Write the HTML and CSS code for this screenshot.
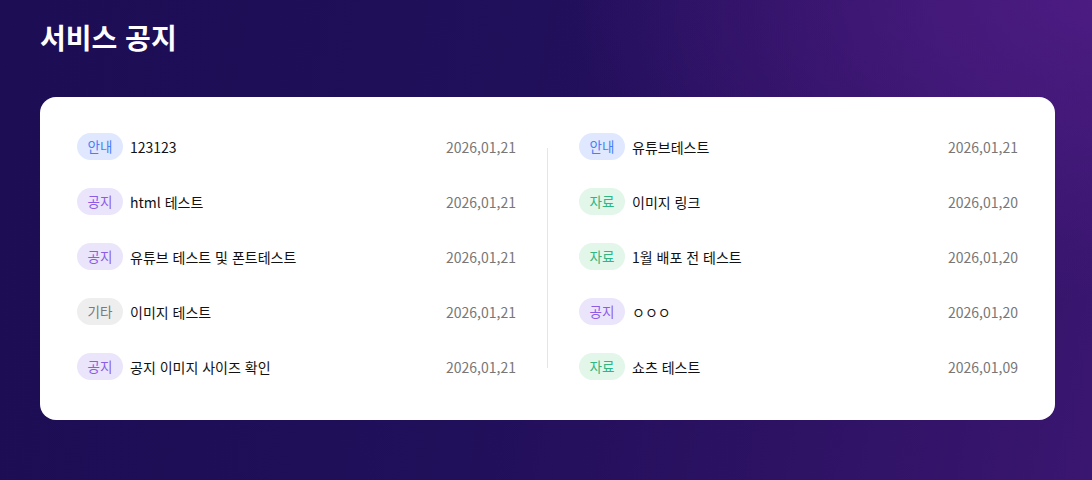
FILE: index.html
```html
<!DOCTYPE html>
<html lang="ko">
<head>
<meta charset="utf-8">
<title>서비스 공지</title>
<link rel="stylesheet" href="styles.css">
</head>
<body>
<main class="page">
  <h1 class="title">서비스 공지</h1>
  <section class="card">
    <ul class="list">
      <li class="row"><span class="badge info">안내</span><span class="subject">123123</span><span class="date">2026,01,21</span></li>
      <li class="row"><span class="badge notice">공지</span><span class="subject">html 테스트</span><span class="date">2026,01,21</span></li>
      <li class="row"><span class="badge notice">공지</span><span class="subject">유튜브 테스트 및 폰트테스트</span><span class="date">2026,01,21</span></li>
      <li class="row"><span class="badge etc">기타</span><span class="subject">이미지 테스트</span><span class="date">2026,01,21</span></li>
      <li class="row"><span class="badge notice">공지</span><span class="subject">공지 이미지 사이즈 확인</span><span class="date">2026,01,21</span></li>
    </ul>
    <div class="divider"></div>
    <ul class="list">
      <li class="row"><span class="badge info">안내</span><span class="subject">유튜브테스트</span><span class="date">2026,01,21</span></li>
      <li class="row"><span class="badge data">자료</span><span class="subject">이미지 링크</span><span class="date">2026,01,20</span></li>
      <li class="row"><span class="badge data">자료</span><span class="subject">1월 배포 전 테스트</span><span class="date">2026,01,20</span></li>
      <li class="row"><span class="badge notice">공지</span><span class="subject">ㅇㅇㅇ</span><span class="date">2026,01,20</span></li>
      <li class="row"><span class="badge data">자료</span><span class="subject">쇼츠 테스트</span><span class="date">2026,01,09</span></li>
    </ul>
  </section>
</main>
</body>
</html>
```
FILE: styles.css
```css
html, body {
  margin: 0;
  height: 100%;
}
body {
  font-family: "Noto Sans CJK KR", "Noto Sans", sans-serif;
  background:
    radial-gradient(ellipse 520px 300px at 100% 0%, rgba(78, 28, 132, 0.9) 0%, rgba(78, 28, 132, 0) 100%),
    linear-gradient(100deg, #1c0d54 0%, #200f5a 45%, #2e1264 75%, #3a1670 100%);
  overflow: hidden;
}
.page {
  padding: 18px 37px 0 40px;
}
.title {
  margin: 0;
  font-size: 28px;
  line-height: 38px;
  font-weight: 700;
  color: #ffffff;
}
.card {
  margin-top: 41px;
  background: #ffffff;
  border-radius: 16px;
  padding: 22px 37px 26px;
  display: grid;
  grid-template-columns: 1fr 1px 1fr;
  column-gap: 31px;
}
.list {
  list-style: none;
  margin: 0;
  padding: 0;
}
.divider {
  background: #e6e6e6;
  margin: 29px 0 26px;
}
.row {
  height: 55px;
  display: flex;
  align-items: center;
}
.badge {
  width: 46px;
  height: 27px;
  line-height: 27px;
  text-align: center;
  border-radius: 14px;
  font-size: 13.5px;
  margin-right: 7px;
  flex: none;
}
.badge.info { background: #dfe8ff; color: #4a7ef6; }
.badge.notice { background: #ebe5fb; color: #8b5ce6; }
.badge.etc { background: #eeeeee; color: #7a7a7a; }
.badge.data { background: #e2f6e9; color: #2db784; }
.subject {
  font-size: 14px;
  color: #111111;
  flex: 1;
  white-space: nowrap;
}
.date {
  font-size: 14px;
  color: #777777;
  flex: none;
}
```
